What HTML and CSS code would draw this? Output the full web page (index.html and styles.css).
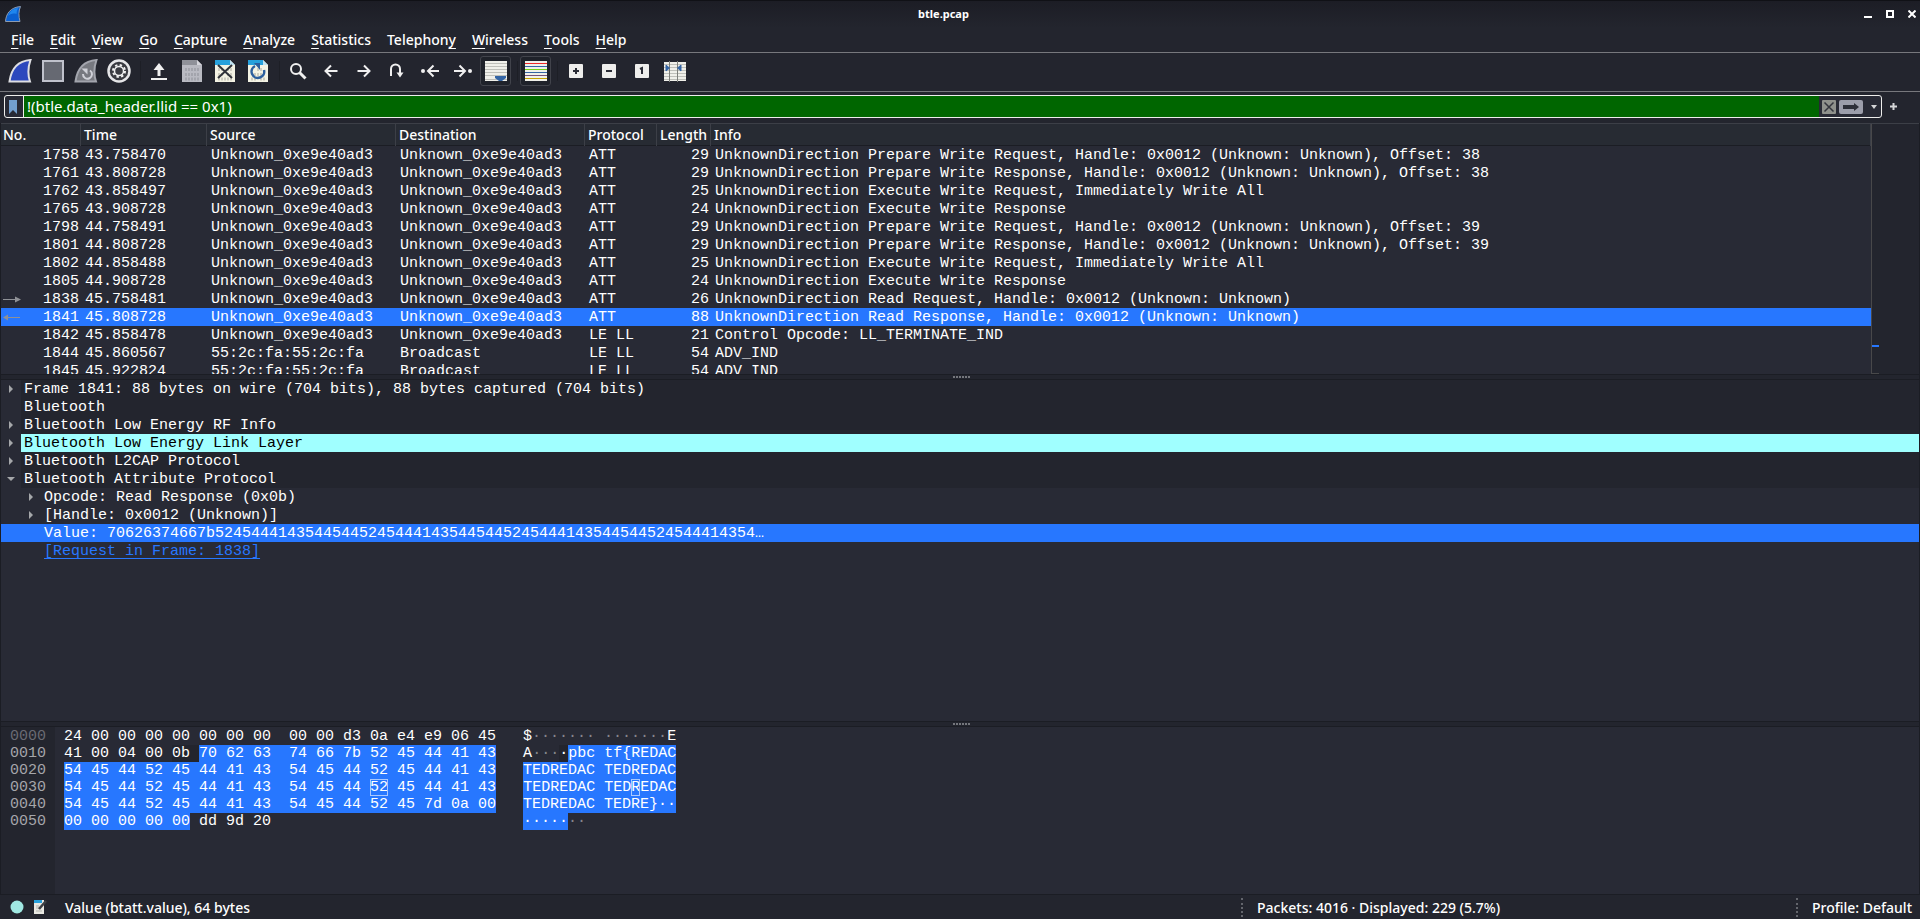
FILE: index.html
```html
<!DOCTYPE html>
<html lang="en">
<head>
    <meta charset="utf-8">
    <title>btle.pcap</title>
    <link rel="stylesheet" href="styles.css">
</head>
<body>
    <!-- Window title -->
    <header class="titlebar">
        <svg class="appIcon" width="16" height="16" viewBox="0 0 16 16">
            <path d="M0.5 15.5C1 8 5 1.500 15.500 0.500C13.500 5 13.500 10 15 15.500Z" fill="#0a5fd0" stroke="#8d9bb0"/>
            <path d="M3 10C5 5 8 2.500 13 2C12 4 11.500 6 11.500 8C8 7 5 8 3 10Z" fill="#1f86ee"/>
        </svg>
        <h1>btle.pcap</h1>
        <div class="windowButtons">
            <button aria-label="Minimize"><svg width="8" height="8"><path d="M0 6h8v2h-8z" fill="#fff"/></svg></button>
            <button aria-label="Maximize"><svg width="8" height="8"><path d="M1 1h6v6h-6z" fill="none" stroke="#fff" stroke-width="2"/></svg></button>
            <button aria-label="Close"><svg width="8" height="8"><path d="M0.500 0.500l7 7M7.500 0.500l-7 7" stroke="#fff" stroke-width="2"/></svg></button>
        </div>
    </header>

    <nav class="menubar">
        <button><u>F</u>ile</button>
        <button><u>E</u>dit</button>
        <button><u>V</u>iew</button>
        <button><u>G</u>o</button>
        <button><u>C</u>apture</button>
        <button><u>A</u>nalyze</button>
        <button><u>S</u>tatistics</button>
        <button>Telephon<u>y</u></button>
        <button><u>W</u>ireless</button>
        <button><u>T</u>ools</button>
        <button><u>H</u>elp</button>
    </nav>

    <div class="toolbar">
        <button aria-label="Start capture">
            <svg width="24" height="24" viewBox="0 0 24 24">
                <path d="M1.500 22.500C3 11 9 2 22.500 1C20 8 19.500 15 22 22.500Z" fill="#2c48bd" stroke="#dedfe3" stroke-width="2"/>
            </svg>
        </button>
        <button aria-label="Stop capture">
            <svg width="24" height="24" viewBox="0 0 24 24">
                <path d="M2 2h20v20h-20z" fill="#666972" stroke="#c0c2cc" stroke-width="2"/>
            </svg>
        </button>
        <button aria-label="Restart capture">
            <svg width="24" height="24" viewBox="0 0 24 24">
                <path d="M1.500 22.500C3 11 9 2 22.500 1C20 8 19.500 15 22 22.500Z" fill="#777980" stroke="#a3a5ad" stroke-width="2"/>
                <path d="M16 11.500A4.500 4.500 0 1 1 9 15" fill="none" stroke="#d0d1d8" stroke-width="2"/>
                <path d="M7.500 9.500h6v6z" fill="#d0d1d8"/>
            </svg>
        </button>
        <button aria-label="Capture options">
            <svg width="24" height="24" viewBox="0 0 24 24">
                <circle cx="12" cy="12" r="10.500" fill="#3a3b41" stroke="#e6e6e8" stroke-width="2.500"/>
                <circle cx="12" cy="12" r="6" fill="none" stroke="#f2f2f2" stroke-width="2" stroke-dasharray="2.360 2.350"/>
                <circle cx="12" cy="12" r="4.500" fill="none" stroke="#f2f2f2" stroke-width="1.500"/>
            </svg>
        </button>
        <span class="separator"></span>
        <button aria-label="Open">
            <svg width="24" height="24" viewBox="0 0 24 24">
                <path d="M4 19h16v2h-16zM10.500 17v-6h-4L12 4l5.500 7h-4v6z" fill="#f0f0f0"/>
            </svg>
        </button>
        <button aria-label="Save">
            <svg width="24" height="24" viewBox="0 0 24 24">
                <path d="M2 1h15l5 5v17h-20z" fill="#b9bac2"/>
                <path d="M2 1h15v5h-15z" fill="#8f9199"/>
                <path d="M17 1l5 5h-5z" fill="#d5d6dc"/>
                <path d="M6 9v3M9 9v3M12 9v3M15 9v3M18 9v3M6 14v3M9 14v3M12 14v3M15 14v3M18 14v3M6 18.500v3M9 18.500v3M12 18.500v3M15 18.500v3M18 18.500v3" stroke="#8d8f97"/>
            </svg>
        </button>
        <button aria-label="Close file">
            <svg width="24" height="24" viewBox="0 0 24 24">
                <path d="M2 1h15l5 5v17h-20z" fill="#f4f3e4"/>
                <path d="M2 1h15v5h-15z" fill="#27a1dc"/>
                <path d="M17 1l5 5h-5z" fill="#bfe3f2"/>
                <path d="M6 9v3M9 9v3M15 9v3M18 9v3M6 14v3M9 14v3M15 14v3M18 14v3M6 18.500v3M9 18.500v3M12 18.500v3M15 18.500v3M18 18.500v3" stroke="#a8a79d"/>
                <path d="M5 6l14 13M19 6L5 19" stroke="#30333a" stroke-width="2"/>
            </svg>
        </button>
        <button aria-label="Reload file">
            <svg width="24" height="24" viewBox="0 0 24 24">
                <path d="M2 1h15l5 5v17h-20z" fill="#f4f3e4"/>
                <path d="M2 1h15v5h-15z" fill="#27a1dc"/>
                <path d="M17 1l5 5h-5z" fill="#bfe3f2"/>
                <path d="M6 9v3M9 14v3M12 9v3M15 9v3M12 14v3M15 14v3M6 18.500v3M9 18.500v3M15 18.500v3M18 18.500v3" stroke="#a8a79d"/>
                <path d="M9 7A6.300 6.300 0 1 0 18 11" fill="none" stroke="#2c5f9e" stroke-width="2.500"/>
                <path d="M8 4h6v7z" fill="#2c5f9e"/>
            </svg>
        </button>
        <span class="separator"></span>
        <button aria-label="Find packet">
            <svg width="24" height="24" viewBox="0 0 24 24">
                <circle cx="10" cy="10" r="5" fill="none" stroke="#f0f0f0" stroke-width="2"/>
                <path d="M13.500 13.500l6 6" stroke="#f0f0f0" stroke-width="3"/>
            </svg>
        </button>
        <button aria-label="Go back">
            <svg width="24" height="24" viewBox="0 0 24 24">
                <path d="M18.500 12h-12M12 6.500L6.500 12l5.500 5.500" fill="none" stroke="#f0f0f0" stroke-width="2"/>
            </svg>
        </button>
        <button aria-label="Go forward">
            <svg width="24" height="24" viewBox="0 0 24 24">
                <path d="M5.500 12h12M12 6.500l5.500 5.500L12 17.500" fill="none" stroke="#f0f0f0" stroke-width="2"/>
            </svg>
        </button>
        <button aria-label="Go to packet">
            <svg width="24" height="24" viewBox="0 0 24 24">
                <path d="M6 17v-7a4.500 4.500 0 0 1 9 0v5" fill="none" stroke="#f0f0f0" stroke-width="2"/>
                <path d="M11.500 13.500h7L15 18.500z" fill="#f0f0f0"/>
            </svg>
        </button>
        <button aria-label="First packet">
            <svg width="24" height="24" viewBox="0 0 24 24">
                <circle cx="5" cy="12" r="2" fill="#f0f0f0"/>
                <path d="M21 12h-11M15.500 6.500L10 12l5.500 5.500" fill="none" stroke="#f0f0f0" stroke-width="2"/>
            </svg>
        </button>
        <button aria-label="Last packet">
            <svg width="24" height="24" viewBox="0 0 24 24">
                <circle cx="19" cy="12" r="2" fill="#f0f0f0"/>
                <path d="M3 12h11M8.500 6.500L14 12l-5.500 5.500" fill="none" stroke="#f0f0f0" stroke-width="2"/>
            </svg>
        </button>
        <button class="pressed" aria-label="Auto scroll">
            <svg width="22" height="20" viewBox="0 0 22 20">
                <path d="M0 0h22v20h-22z" fill="#f0f0ea"/>
                <path d="M0 2.500h22M0 5.500h22M0 8.500h22M0 11.500h22M0 14.500h22M0 18.500h22" stroke="#bfc0ba"/>
                <path d="M10 15h11v2l-4 3h-3l-4-3z" fill="#3465a4"/>
            </svg>
        </button>
        <span class="separator"></span>
        <button class="pressed" aria-label="Colorize packets">
            <svg width="22" height="20" viewBox="0 0 22 20">
                <path d="M0 0h22v20h-22z" fill="#f0f0ea"/>
                <path d="M0 2.500h22" stroke="#ef2929"/>
                <path d="M0 5.500h22M0 11.500h22" stroke="#3465a4"/>
                <path d="M0 8.500h22" stroke="#73d216"/>
                <path d="M0 14.500h22" stroke="#75507b"/>
                <path d="M0 17.500h22" stroke="#c4a000"/>
            </svg>
        </button>
        <span class="separator"></span>
        <button aria-label="Zoom in">
            <svg width="14" height="14" viewBox="0 0 14 14">
                <rect width="14" height="14" rx="1" fill="#eeeeec"/>
                <path d="M4 7h6M7 4v6" stroke="#2a2c35" stroke-width="2"/>
            </svg>
        </button>
        <button aria-label="Zoom out">
            <svg width="14" height="14" viewBox="0 0 14 14">
                <rect width="14" height="14" rx="1" fill="#eeeeec"/>
                <path d="M4 7h6" stroke="#2a2c35" stroke-width="2"/>
            </svg>
        </button>
        <button aria-label="Normal size">
            <svg width="14" height="14" viewBox="0 0 14 14">
                <rect width="14" height="14" rx="1" fill="#eeeeec"/>
                <path d="M5 5l2-1v6" fill="none" stroke="#2a2c35" stroke-width="2"/>
            </svg>
        </button>
        <button aria-label="Resize columns">
            <svg width="22" height="21" viewBox="0 0 22 21">
                <path d="M0 1h22v19h-22z" fill="#f0f0ea"/>
                <path d="M0 3.500h22M0 6.500h22M0 9.500h22M0 12.500h22M0 15.500h22M0 18.500h22" stroke="#bfc0ba"/>
                <path d="M5.500 0v21M13.500 0v21" stroke="#7d7f7a"/>
                <path d="M2 4l3.500 3L2 10zM17 4l-3.500 3L17 10z" fill="#3465a4" stroke="#3465a4"/>
            </svg>
        </button>
    </div>

    <div class="filterBar">
        <div class="filterBox">
            <button class="bookmark" aria-label="Bookmark">
                <svg width="8" height="14"><path d="M0 0h8v14l-4-4-4 4z" fill="#729fcf"/></svg>
            </button>
            <input type="text" class="filterInput" aria-label="Display filter" value="!(btle.data_header.llid == 0x1)" spellcheck="false">
            <button aria-label="Clear">
                <svg width="14" height="14"><rect width="14" height="14" rx="1" fill="#8f918c"/><path d="M2.500 2.500l9 9M11.500 2.500l-9 9" stroke="#33353d" stroke-width="1.500"/></svg>
            </button>
            <button aria-label="Apply">
                <svg width="24" height="14"><rect width="24" height="14" rx="2" fill="#9c9eab"/><path d="M4 5h11V3l5 4-5 4V9H4z" fill="#2d2f39"/></svg>
            </button>
            <button class="dropdown" aria-label="Filter history">
                <svg width="6" height="4"><path d="M0 0h6L3 4z" fill="#d5d6d8"/></svg>
            </button>
        </div>
        <button class="addFilter" aria-label="Add filter button">
            <svg width="7" height="7"><path d="M0 3.500h7M3.500 0v7" stroke="#d5d6d8" stroke-width="2"/></svg>
        </button>
    </div>

    <main class="panes">
        <section class="packetList">
            <div class="packetScroll">
                <table class="packets">
                    <colgroup>
                        <col class="colNo"><col class="colTime"><col class="colAddress"><col class="colAddress"><col class="colProtocol"><col class="colLength"><col>
                    </colgroup>
                    <thead>
                        <tr><th>No.</th><th>Time</th><th>Source</th><th>Destination</th><th>Protocol</th><th>Length</th><th>Info</th></tr>
                    </thead>
                    <tbody>
                        <tr><td>1758</td><td>43.758470</td><td>Unknown_0xe9e40ad3</td><td>Unknown_0xe9e40ad3</td><td>ATT</td><td>29</td><td>UnknownDirection Prepare Write Request, Handle: 0x0012 (Unknown: Unknown), Offset: 38</td></tr>
                        <tr><td>1761</td><td>43.808728</td><td>Unknown_0xe9e40ad3</td><td>Unknown_0xe9e40ad3</td><td>ATT</td><td>29</td><td>UnknownDirection Prepare Write Response, Handle: 0x0012 (Unknown: Unknown), Offset: 38</td></tr>
                        <tr><td>1762</td><td>43.858497</td><td>Unknown_0xe9e40ad3</td><td>Unknown_0xe9e40ad3</td><td>ATT</td><td>25</td><td>UnknownDirection Execute Write Request, Immediately Write All</td></tr>
                        <tr><td>1765</td><td>43.908728</td><td>Unknown_0xe9e40ad3</td><td>Unknown_0xe9e40ad3</td><td>ATT</td><td>24</td><td>UnknownDirection Execute Write Response</td></tr>
                        <tr><td>1798</td><td>44.758491</td><td>Unknown_0xe9e40ad3</td><td>Unknown_0xe9e40ad3</td><td>ATT</td><td>29</td><td>UnknownDirection Prepare Write Request, Handle: 0x0012 (Unknown: Unknown), Offset: 39</td></tr>
                        <tr><td>1801</td><td>44.808728</td><td>Unknown_0xe9e40ad3</td><td>Unknown_0xe9e40ad3</td><td>ATT</td><td>29</td><td>UnknownDirection Prepare Write Response, Handle: 0x0012 (Unknown: Unknown), Offset: 39</td></tr>
                        <tr><td>1802</td><td>44.858488</td><td>Unknown_0xe9e40ad3</td><td>Unknown_0xe9e40ad3</td><td>ATT</td><td>25</td><td>UnknownDirection Execute Write Request, Immediately Write All</td></tr>
                        <tr><td>1805</td><td>44.908728</td><td>Unknown_0xe9e40ad3</td><td>Unknown_0xe9e40ad3</td><td>ATT</td><td>24</td><td>UnknownDirection Execute Write Response</td></tr>
                        <tr><td><span class="numberCell"><svg width="18" height="8"><path d="M0 3.500h14" stroke="#8f9196"/><path d="M12 0.500l6 3-6 3z" fill="#8f9196"/></svg>1838</span></td><td>45.758481</td><td>Unknown_0xe9e40ad3</td><td>Unknown_0xe9e40ad3</td><td>ATT</td><td>26</td><td>UnknownDirection Read Request, Handle: 0x0012 (Unknown: Unknown)</td></tr>
                        <tr class="selected"><td><span class="numberCell"><svg width="18" height="8"><path d="M3 3.500h14" stroke="#8f9196"/><path d="M5 0.500l-5 3 5 3z" fill="#8f9196"/></svg>1841</span></td><td>45.808728</td><td>Unknown_0xe9e40ad3</td><td>Unknown_0xe9e40ad3</td><td>ATT</td><td>88</td><td>UnknownDirection Read Response, Handle: 0x0012 (Unknown: Unknown)</td></tr>
                        <tr><td>1842</td><td>45.858478</td><td>Unknown_0xe9e40ad3</td><td>Unknown_0xe9e40ad3</td><td>LE LL</td><td>21</td><td>Control Opcode: LL_TERMINATE_IND</td></tr>
                        <tr><td>1844</td><td>45.860567</td><td>55:2c:fa:55:2c:fa</td><td>Broadcast</td><td>LE LL</td><td>54</td><td>ADV_IND</td></tr>
                        <tr><td>1845</td><td>45.922824</td><td>55:2c:fa:55:2c:fa</td><td>Broadcast</td><td>LE LL</td><td>54</td><td>ADV_IND</td></tr>
                    </tbody>
                </table>
            </div>
            <div class="minimap">
                <svg width="7" height="250"><path d="M0 221h7v2h-7z" fill="#2777ff"/><path d="M0 249h7v1h-7z" fill="#48484a"/></svg>
            </div>
        </section>

        <div class="splitter"><svg width="18" height="2"><path d="M0 1h18" stroke="#74767c" stroke-width="2" stroke-dasharray="2 1"/></svg></div>

        <section class="details">
            <div class="treeRow root">
                <svg class="arrow" width="4" height="8"><path d="M0 0l4 4-4 4z" fill="#a5a7aa"/></svg>
                <span class="label">Frame 1841: 88 bytes on wire (704 bits), 88 bytes captured (704 bits)</span>
            </div>
            <div class="treeRow root">
                <span class="label">Bluetooth</span>
            </div>
            <div class="treeRow root">
                <svg class="arrow" width="4" height="8"><path d="M0 0l4 4-4 4z" fill="#a5a7aa"/></svg>
                <span class="label">Bluetooth Low Energy RF Info</span>
            </div>
            <div class="treeRow root linked">
                <svg class="arrow" width="4" height="8"><path d="M0 0l4 4-4 4z" fill="#a5a7aa"/></svg>
                <span class="label">Bluetooth Low Energy Link Layer</span>
            </div>
            <div class="treeRow root">
                <svg class="arrow" width="4" height="8"><path d="M0 0l4 4-4 4z" fill="#a5a7aa"/></svg>
                <span class="label">Bluetooth L2CAP Protocol</span>
            </div>
            <div class="treeRow root">
                <svg class="arrow open" width="8" height="4"><path d="M0 0h8L4 4z" fill="#a5a7aa"/></svg>
                <span class="label">Bluetooth Attribute Protocol</span>
            </div>
            <div class="treeRow child">
                <svg class="arrow" width="4" height="8"><path d="M0 0l4 4-4 4z" fill="#a5a7aa"/></svg>
                <span class="label">Opcode: Read Response (0x0b)</span>
            </div>
            <div class="treeRow child">
                <svg class="arrow" width="4" height="8"><path d="M0 0l4 4-4 4z" fill="#a5a7aa"/></svg>
                <span class="label">[Handle: 0x0012 (Unknown)]</span>
            </div>
            <div class="treeRow child selected">
                <span class="label">Value: 70626374667b524544414354454452454441435445445245444143544544524544414354…</span>
            </div>
            <div class="treeRow child">
                <span class="label"><a href="#">[Request in Frame: 1838]</a></span>
            </div>
        </section>

        <div class="splitter"><svg width="18" height="2"><path d="M0 1h18" stroke="#74767c" stroke-width="2" stroke-dasharray="2 1"/></svg></div>

        <section class="bytes">
<pre class="offsets"><span class="dim">0000</span>
0010
0020
0030
0040
0050</pre>
<pre class="hex">24 00 00 00 00 00 00 00  00 00 d3 0a e4 e9 06 45   $<i>·······</i> <i>·······</i>E
41 00 04 00 <b>0b </b><mark>70 62 63  74 66 7b 52 45 44 41 43</mark>   A<i>···</i><b>·</b><mark>pbc tf{REDAC</mark>
<mark>54 45 44 52 45 44 41 43  54 45 44 52 45 44 41 43</mark>   <mark>TEDREDAC TEDREDAC</mark>
<mark>54 45 44 52 45 44 41 43  54 45 44 <span class="hover">52</span> 45 44 41 43</mark>   <mark>TEDREDAC TED<span class="hover">R</span>EDAC</mark>
<mark>54 45 44 52 45 44 41 43  54 45 44 52 45 7d 0a 00</mark>   <mark>TEDREDAC TEDRE}··</mark>
<mark>00 00 00 00 00</mark> dd 9d 20                            <mark>·····</mark><i>··</i></pre>
        </section>
    </main>

    <footer class="statusbar">
        <button aria-label="Expert information"><svg width="14" height="14"><circle cx="7" cy="7" r="6.500" fill="#a0e8e2"/></svg></button>
        <button aria-label="Capture file comment">
            <svg width="14" height="14">
                <path d="M1 0h10v14h-10z" fill="#e8e8e2"/>
                <path d="M1 0h8v3h-8z" fill="#27a1dc"/>
                <path d="M3 6h3M3 8h3M3 11h6" stroke="#b3b3ae"/>
                <path d="M13 1L6 9" stroke="#3c3f44" stroke-width="2.500"/>
            </svg>
        </button>
        <span class="fieldInfo">Value (btatt.value), 64 bytes</span>
        <span class="packetCount">Packets: 4016 · Displayed: 229 (5.7%)</span>
        <span class="profile">Profile: Default</span>
    </footer>
</body>
</html>
```
FILE: styles.css
```css
* {
    box-sizing: border-box;
}

body {
    display: flex;
    flex-direction: column;
    height: 100vh;
    margin: 0;
    overflow: hidden;
    background: #23252e;
    color: #fff;
    font-family: "Noto Sans", sans-serif;
    font-size: 14px;
    font-weight: 500;
}

button {
    display: flex;
    align-items: center;
    justify-content: center;
    padding: 0;
    border: none;
    background: none;
    color: inherit;
    font: inherit;
}

svg {
    display: block;
    flex: none;
}

/* Title and menus */
.titlebar {
    display: flex;
    align-items: center;
    height: 28px;
    padding: 0 4px 2px 5px;
    border-top: 1px solid #101116;
    background: linear-gradient(#1c1d25, #23252e);
}

.titlebar h1 {
    flex: 1;
    margin: 0;
    padding-left: 2px;
    font-size: 11px;
    text-align: center;
}

.windowButtons {
    display: flex;
    gap: 14px;
}

.menubar {
    display: flex;
    gap: 16px;
    height: 25px;
    padding: 0 0 2px 11px;
    border-bottom: 1px solid #77787d;
}

.menubar u {
    text-underline-offset: 3px;
    text-decoration-skip-ink: none;
}

/* Toolbar */
.toolbar {
    display: flex;
    align-items: center;
    gap: 2px;
    height: 39px;
    padding: 0 0 2px 4px;
    border-bottom: 1px solid #77787d;
}

.toolbar button {
    width: 31px;
    height: 30px;
}

.toolbar .pressed {
    border: 1px solid #41434b;
    border-radius: 3px;
    background: #1f222a;
}

.separator {
    width: 5px;
    height: 20px;
    border-right: 1px solid #1d1f26;
}

/* Display filter */
.filterBar {
    display: flex;
    gap: 8px;
    height: 31px;
    padding: 3px 23px 5px 4px;
}

.filterBox {
    display: flex;
    flex: 1;
    align-items: center;
    gap: 3px;
    height: 23px;
    border: 1px solid #eeeeec;
    border-radius: 3px;
    background: #282a35;
}

.bookmark {
    width: 15px;
}

.filterInput {
    flex: 1;
    height: 21px;
    padding: 0 3px 2px;
    border: none;
    border-left: 1px solid #eeeeec;
    outline: none;
    background: #006600;
    color: #fff;
    font: inherit;
    font-size: 15px;
    font-weight: normal;
}

.dropdown {
    width: 15px;
}

/* Panes */
.panes {
    display: flex;
    flex: 1;
    flex-direction: column;
    min-height: 0;
    border: 1px solid #1b1d24;
    border-width: 0 1px;
    font-family: "Liberation Mono", monospace;
    font-size: 15px;
    font-weight: normal;
}

.packetList {
    display: flex;
    flex: 250;
    min-height: 0;
    border-top: 1px solid #3c3f47;
}

.packetScroll {
    flex: 1;
    min-width: 0;
    overflow: hidden;
    background: #282a35;
}

.packets {
    width: 100%;
    table-layout: fixed;
    border-collapse: collapse;
    line-height: 17px;
    white-space: nowrap;
}

.colNo { width: 80px; }
.colTime { width: 126px; }
.colAddress { width: 189px; }
.colProtocol { width: 72px; }
.colLength { width: 54px; }

.packets th {
    height: 22px;
    padding: 0 0 2px 3px;
    background: #272b33;
    box-shadow: inset -1px 0 #3c3f47, inset 0 -1px #1b1d24;
    font-family: "Noto Sans", sans-serif;
    font-size: 14px;
    font-weight: 500;
    text-align: left;
}

.packets th:first-child {
    padding-left: 2px;
}

.packets td {
    height: 18px;
    padding: 1px 2px 0 4px;
    overflow: hidden;
}

.packets td:nth-child(1),
.packets td:nth-child(6) {
    padding-left: 2px;
    text-align: right;
}

.numberCell {
    display: flex;
    align-items: center;
    justify-content: space-between;
}

.selected {
    background: #2777ff;
}

.minimap {
    width: 48px;
    border-left: 1px solid #48484a;
}

.splitter {
    display: flex;
    align-items: center;
    justify-content: center;
    height: 6px;
    padding-left: 3px;
    border: 1px solid #1b1d24;
    border-width: 1px 0;
}

.details {
    flex: 341;
    min-height: 0;
    overflow: hidden;
    background: #282a35;
}

.treeRow {
    display: flex;
    align-items: center;
    line-height: 17px;
    white-space: pre;
}

.treeRow .arrow {
    margin: 0 -12px 0 8px;
}

.treeRow .open {
    margin: 0 -14px 0 6px;
}

.child {
    padding-left: 20px;
}

.label {
    flex: 1;
    margin-left: 20px;
    padding: 1px 0 0 3px;
}

.root .label {
    background: #23252e;
}

.linked .label {
    background: #a0ffff;
    color: #000;
}

.details a {
    color: #2777ff;
    text-underline-offset: 3px;
}

/* Packet bytes */
.bytes {
    display: flex;
    flex: 167;
    min-height: 0;
    background: #282a35;
    line-height: 17px;
}

.bytes pre {
    margin: 0;
    padding: 1px 0 0 9px;
    font-family: inherit;
}

.offsets {
    width: 54px;
    background: #23252e;
    color: #a5a6aa;
}

.dim {
    color: #6a6b73;
}

.hex i {
    color: #85868c;
    font-style: normal;
}

.hex b {
    background: #23252e;
    font-weight: normal;
}

.hex mark {
    background: #2777ff;
    color: #fff;
}

.hover {
    outline: 1px solid #a9c8ff;
    outline-offset: -1px;
}

/* Status bar */
.statusbar {
    display: flex;
    align-items: center;
    gap: 9px;
    height: 25px;
    padding: 0 8px 0 10px;
    border-top: 1px solid #1b1d24;
}

.fieldInfo {
    flex: 1;
    padding-left: 9px;
}

.packetCount,
.profile {
    padding-left: 14px;
    border-left: 2px dotted #63656c;
}

.packetCount {
    width: 546px;
}
```
